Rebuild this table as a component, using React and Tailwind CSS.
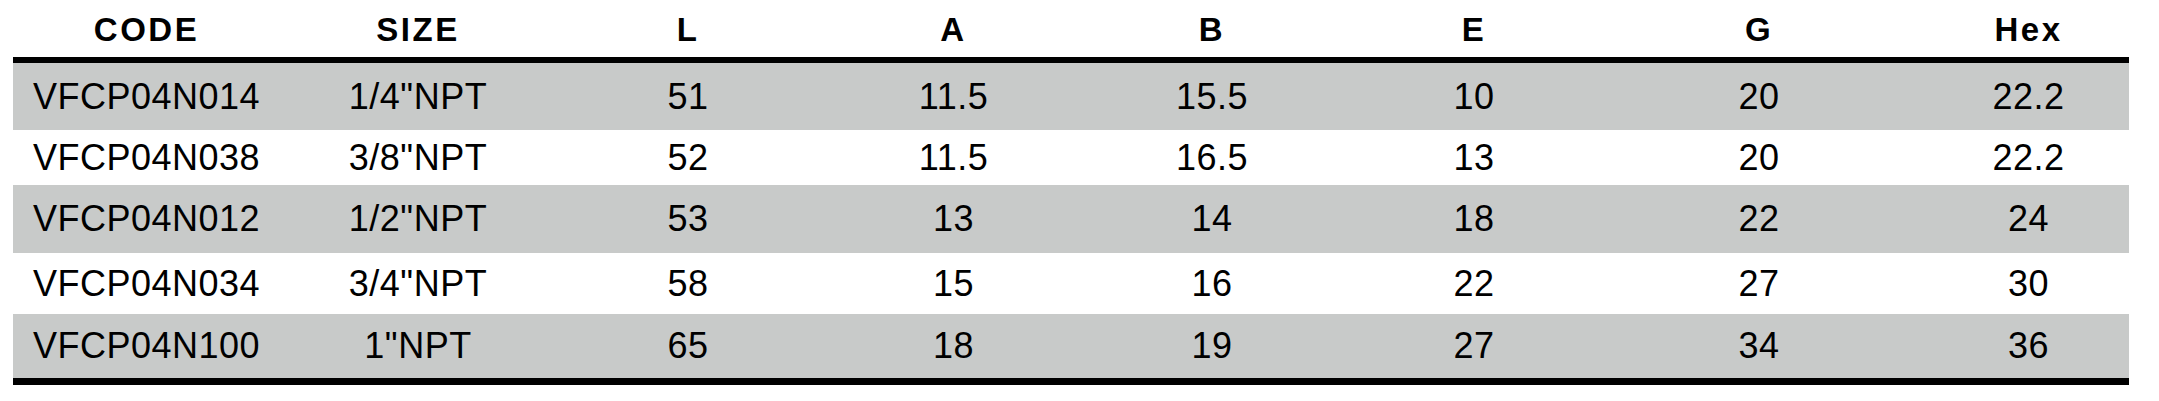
const headers = ['CODE', 'SIZE', 'L', 'A', 'B', 'E', 'G', 'Hex'];

const rows = [
  { h: 'h-[67px]', shade: true, cells: ['VFCP04N014', '1/4"NPT', '51', '11.5', '15.5', '10', '20', '22.2'] },
  { h: 'h-[55px]', shade: false, cells: ['VFCP04N038', '3/8"NPT', '52', '11.5', '16.5', '13', '20', '22.2'] },
  { h: 'h-[68px]', shade: true, cells: ['VFCP04N012', '1/2"NPT', '53', '13', '14', '18', '22', '24'] },
  { h: 'h-[61px]', shade: false, cells: ['VFCP04N034', '3/4"NPT', '58', '15', '16', '22', '27', '30'] },
  { h: 'h-[64px]', shade: true, cells: ['VFCP04N100', '1"NPT', '65', '18', '19', '27', '34', '36'] },
];

const cols = 'grid grid-cols-[267px_276px_264px_267px_250px_274px_296px_1fr]';

export default function App() {
  return (
    <div className="w-[2159px] h-[401px] bg-white pl-[13px] font-['Liberation_Sans',Arial,sans-serif] text-black">
      <div className="w-[2116px]">
        {/* header */}
        <div className={`${cols} h-[57px] items-center pt-[2px] text-[33px] font-bold tracking-[2.5px]`}>
          {headers.map((h, i) => (
            <div key={h} className={i === 7 ? 'pl-[21px] text-center' : 'text-center'}>
              {h}
            </div>
          ))}
        </div>
        <div className="h-[6px] bg-black" />

        {rows.map((r) => (
          <div
            key={r.cells[0]}
            className={`${cols} ${r.h} items-center text-[36px] tracking-[0.5px] ${r.shade ? 'bg-[#c8cac9]' : 'bg-white'}`}
          >
            {r.cells.map((c, i) => (
              <div key={i} className={i === 7 ? 'pl-[21px] text-center' : 'text-center'}>
                {c}
              </div>
            ))}
          </div>
        ))}
        <div className="h-[7px] bg-black" />
      </div>
    </div>
  );
}
